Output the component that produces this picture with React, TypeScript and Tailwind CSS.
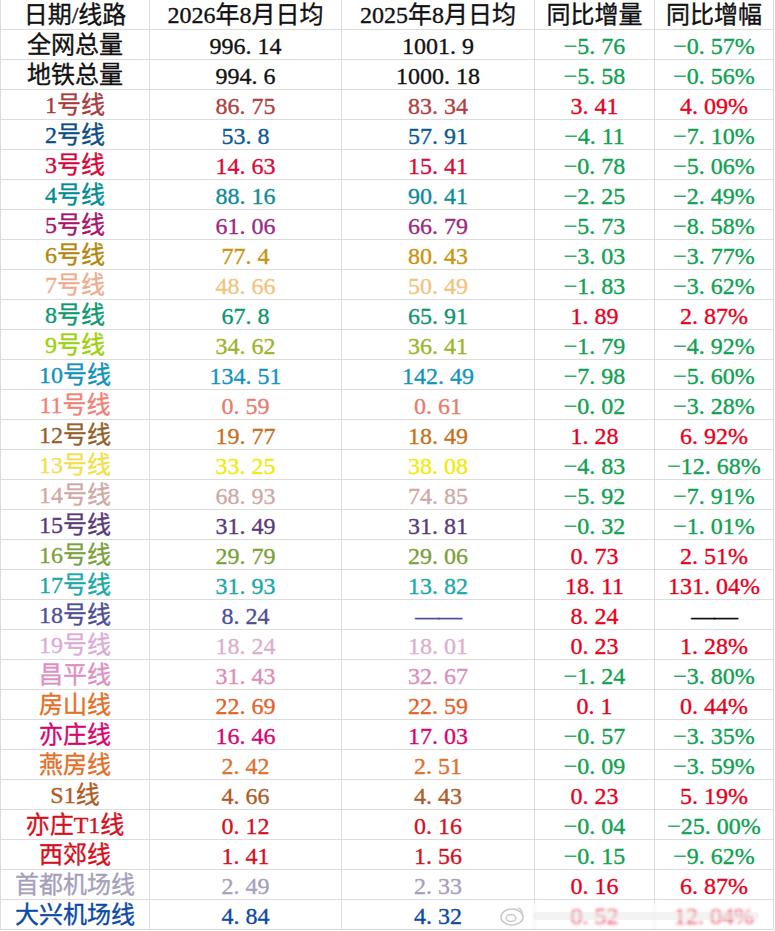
import React from 'react';

type Row = {
  name: string;
  nameColor: string;
  cur: string;
  prev: string;
  numColor: string;
  diff: string;
  pct: string;
};

const GREEN = 'text-[#0fa152]';
const RED = 'text-[#e8001c]';

const rows: Row[] = [
  { name: '全网总量', nameColor: 'text-[#111111]', cur: '996.14', prev: '1001.9', numColor: 'text-[#111111]', diff: '-5.76', pct: '-0.57%' },
  { name: '地铁总量', nameColor: 'text-[#111111]', cur: '994.6', prev: '1000.18', numColor: 'text-[#111111]', diff: '-5.58', pct: '-0.56%' },
  { name: '1号线', nameColor: 'text-[#a83a3e]', cur: '86.75', prev: '83.34', numColor: 'text-[#b0403f]', diff: '3.41', pct: '4.09%' },
  { name: '2号线', nameColor: 'text-[#0b4d86]', cur: '53.8', prev: '57.91', numColor: 'text-[#0b5a92]', diff: '-4.11', pct: '-7.10%' },
  { name: '3号线', nameColor: 'text-[#d4063a]', cur: '14.63', prev: '15.41', numColor: 'text-[#d90a3a]', diff: '-0.78', pct: '-5.06%' },
  { name: '4号线', nameColor: 'text-[#008c95]', cur: '88.16', prev: '90.41', numColor: 'text-[#0c8c96]', diff: '-2.25', pct: '-2.49%' },
  { name: '5号线', nameColor: 'text-[#a8126a]', cur: '61.06', prev: '66.79', numColor: 'text-[#9c2a80]', diff: '-5.73', pct: '-8.58%' },
  { name: '6号线', nameColor: 'text-[#b4860c]', cur: '77.4', prev: '80.43', numColor: 'text-[#c8940e]', diff: '-3.03', pct: '-3.77%' },
  { name: '7号线', nameColor: 'text-[#efad8c]', cur: '48.66', prev: '50.49', numColor: 'text-[#f2c47e]', diff: '-1.83', pct: '-3.62%' },
  { name: '8号线', nameColor: 'text-[#0d9970]', cur: '67.8', prev: '65.91', numColor: 'text-[#0d9670]', diff: '1.89', pct: '2.87%' },
  { name: '9号线', nameColor: 'text-[#9ad10a]', cur: '34.62', prev: '36.41', numColor: 'text-[#9bb52a]', diff: '-1.79', pct: '-4.92%' },
  { name: '10号线', nameColor: 'text-[#0f92bc]', cur: '134.51', prev: '142.49', numColor: 'text-[#1494bd]', diff: '-7.98', pct: '-5.60%' },
  { name: '11号线', nameColor: 'text-[#ef8274]', cur: '0.59', prev: '0.61', numColor: 'text-[#e67d6e]', diff: '-0.02', pct: '-3.28%' },
  { name: '12号线', nameColor: 'text-[#93602a]', cur: '19.77', prev: '18.49', numColor: 'text-[#c4711e]', diff: '1.28', pct: '6.92%' },
  { name: '13号线', nameColor: 'text-[#f2df4c]', cur: '33.25', prev: '38.08', numColor: 'text-[#f2ea0c]', diff: '-4.83', pct: '-12.68%' },
  { name: '14号线', nameColor: 'text-[#cfa9a4]', cur: '68.93', prev: '74.85', numColor: 'text-[#cfa9a4]', diff: '-5.92', pct: '-7.91%' },
  { name: '15号线', nameColor: 'text-[#5a3a78]', cur: '31.49', prev: '31.81', numColor: 'text-[#5a3a78]', diff: '-0.32', pct: '-1.01%' },
  { name: '16号线', nameColor: 'text-[#7ba13a]', cur: '29.79', prev: '29.06', numColor: 'text-[#7ba13a]', diff: '0.73', pct: '2.51%' },
  { name: '17号线', nameColor: 'text-[#1aa8a8]', cur: '31.93', prev: '13.82', numColor: 'text-[#1aa8a8]', diff: '18.11', pct: '131.04%' },
  { name: '18号线', nameColor: 'text-[#4c4f98]', cur: '8.24', prev: '——', numColor: 'text-[#4c4f98]', diff: '8.24', pct: '——' },
  { name: '19号线', nameColor: 'text-[#dcabd8]', cur: '18.24', prev: '18.01', numColor: 'text-[#dcb0cc]', diff: '0.23', pct: '1.28%' },
  { name: '昌平线', nameColor: 'text-[#dd8fc2]', cur: '31.43', prev: '32.67', numColor: 'text-[#d98fba]', diff: '-1.24', pct: '-3.80%' },
  { name: '房山线', nameColor: 'text-[#e0702a]', cur: '22.69', prev: '22.59', numColor: 'text-[#e0632a]', diff: '0.1', pct: '0.44%' },
  { name: '亦庄线', nameColor: 'text-[#d6066e]', cur: '16.46', prev: '17.03', numColor: 'text-[#d6066e]', diff: '-0.57', pct: '-3.35%' },
  { name: '燕房线', nameColor: 'text-[#e0702a]', cur: '2.42', prev: '2.51', numColor: 'text-[#e0702a]', diff: '-0.09', pct: '-3.59%' },
  { name: 'S1线', nameColor: 'text-[#b05a24]', cur: '4.66', prev: '4.43', numColor: 'text-[#b05a24]', diff: '0.23', pct: '5.19%' },
  { name: '亦庄T1线', nameColor: 'text-[#d4101e]', cur: '0.12', prev: '0.16', numColor: 'text-[#d4101e]', diff: '-0.04', pct: '-25.00%' },
  { name: '西郊线', nameColor: 'text-[#d4101e]', cur: '1.41', prev: '1.56', numColor: 'text-[#d4101e]', diff: '-0.15', pct: '-9.62%' },
  { name: '首都机场线', nameColor: 'text-[#a6a0bc]', cur: '2.49', prev: '2.33', numColor: 'text-[#a6a0bc]', diff: '0.16', pct: '6.87%' },
  { name: '大兴机场线', nameColor: 'text-[#0c4aa6]', cur: '4.84', prev: '4.32', numColor: 'text-[#0c4aa6]', diff: '0.52', pct: '12.04%' },
];

const FONT = "font-['Liberation_Serif','Noto_Sans_CJK_SC',serif]";

// SimSun-style wide period and long minus
const Num: React.FC<{ value: string }> = ({ value }) => {
  if (value === '——') return <span className="tracking-[-0.05em]">——</span>;
  const neg = value.startsWith('-');
  const parts = (neg ? value.slice(1) : value).split('.');
  return (
    <span>
      {neg && '−'}
      {parts[0]}
      {parts.length > 1 && <span className="inline-block w-[0.5em] text-left">.</span>}
      {parts[1]}
    </span>
  );
};

const Cell: React.FC<{ className?: string; children: React.ReactNode }> = ({ className = '', children }) => (
  <div className={`h-[30px] flex items-center justify-center border-r border-b border-[#dcdcdc] whitespace-nowrap [-webkit-text-stroke:0.35px_currentColor] ${className}`}>
    {children}
  </div>
);

const App: React.FC = () => {
  return (
    <div className={`w-[775px] h-[931px] bg-white overflow-hidden ${FONT}`}>
      <div className="grid grid-cols-[149px_192px_193px_120px_119px] border-l border-[#dcdcdc]">
        <Cell className="text-[24px] text-[#111]">日期/线路</Cell>
        <Cell className="text-[24px] text-[#111]">2026年8月日均</Cell>
        <Cell className="text-[24px] text-[#111]">2025年8月日均</Cell>
        <Cell className="text-[24px] text-[#111]">同比增量</Cell>
        <Cell className="text-[24px] text-[#111]">同比增幅</Cell>

        {rows.map((r, i) => {
          const up = !r.diff.startsWith('-');
          const last = i === rows.length - 1;
          return (
            <React.Fragment key={r.name}>
              <Cell className={`text-[24px] ${r.nameColor}`}>{r.name}</Cell>
              <Cell className={`pt-[3px] text-[24px] ${r.numColor}`}><Num value={r.cur} /></Cell>
              <Cell className={`pt-[3px] text-[24px] ${r.numColor}`}><Num value={r.prev} /></Cell>
              <Cell className={`pt-[3px] text-[24px] ${up ? RED : GREEN}`}><Num value={r.diff} /></Cell>
              <Cell className={`relative pt-[3px] text-[24px] ${r.pct === '——' ? 'text-[#111]' : up ? RED : GREEN}`}>
                <Num value={r.pct} />
                {last && (
                  <div className="absolute right-[6px] top-[3px] h-[25px] w-[270px] flex items-center gap-2 bg-white/45 backdrop-blur-[1.5px] rounded-l-full">
                    <svg width="26" height="22" viewBox="0 0 26 22" className="shrink-0 ml-[2px]">
                      <ellipse cx="13" cy="12" rx="11" ry="8" fill="white" fillOpacity="0.6" stroke="#c8c8c8" strokeWidth="1.6" />
                      <ellipse cx="12" cy="13" rx="5" ry="3.5" fill="none" stroke="#c8c8c8" strokeWidth="1.4" />
                      <path d="M19 3 q4 1 4 5" fill="none" stroke="#d0d0d0" strokeWidth="1.4" />
                    </svg>
                    <div className="h-[8px] flex-1 mr-2 rounded-full bg-[#e8e8e8]/50" />
                  </div>
                )}
              </Cell>
            </React.Fragment>
          );
        })}
      </div>
    </div>
  );
};

export default App;
